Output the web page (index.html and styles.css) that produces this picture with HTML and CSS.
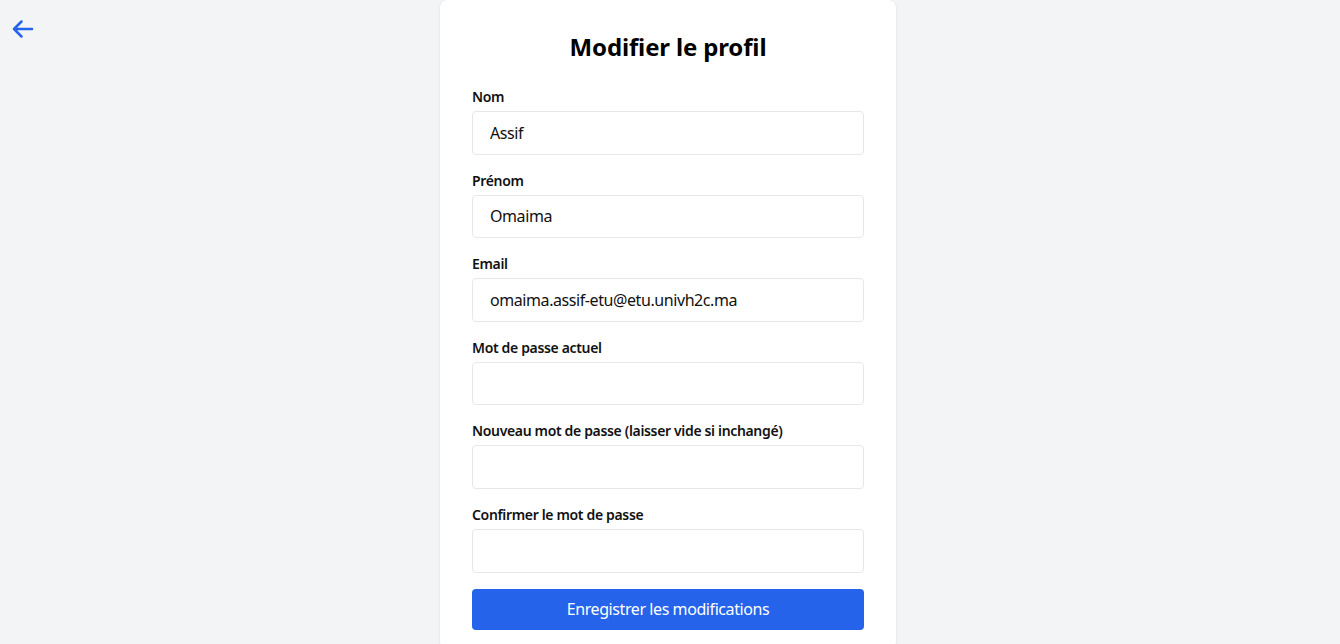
FILE: index.html
```html
<!DOCTYPE html>
<html lang="fr">
<head>
<meta charset="utf-8">
<title>Modifier le profil</title>
<link rel="stylesheet" href="styles.css">
</head>
<body>
<a class="back" href="#" aria-label="Retour">
  <svg width="24" height="24" viewBox="0 0 24 24" fill="none" stroke="currentColor" stroke-width="2.5" stroke-linecap="round" stroke-linejoin="round"><path d="M10.5 19.5 3 12l7.5-7.5M3 12h18"/></svg>
</a>
<main class="page">
  <form class="card">
    <h2 class="title">Modifier le profil</h2>
    <div class="field">
      <label class="label">Nom</label>
      <input class="input" type="text" value="Assif">
    </div>
    <div class="field">
      <label class="label">Prénom</label>
      <input class="input" type="text" value="Omaima">
    </div>
    <div class="field">
      <label class="label">Email</label>
      <input class="input" type="email" value="omaima.assif-etu@etu.univh2c.ma">
    </div>
    <div class="field">
      <label class="label">Mot de passe actuel</label>
      <input class="input" type="password">
    </div>
    <div class="field">
      <label class="label">Nouveau mot de passe (laisser vide si inchangé)</label>
      <input class="input" type="password">
    </div>
    <div class="field">
      <label class="label">Confirmer le mot de passe</label>
      <input class="input" type="password">
    </div>
    <button class="btn" type="button">Enregistrer les modifications</button>
  </form>
</main>
</body>
</html>
```
FILE: styles.css
```css
* { box-sizing: border-box; }
html, body { margin: 0; padding: 0; }
body {
  background: #f3f4f6;
  font-family: "Noto Sans", "Open Sans", sans-serif;
  color: #111827;
  min-height: 644px;
}
.back {
  position: absolute;
  left: 11px;
  top: 17px;
  color: #2563eb;
  display: block;
  line-height: 0;
}
.page {
  display: flex;
  justify-content: center;
  padding-right: 4px;
}
.card {
  width: 456px;
  background: #fff;
  border-radius: 8px;
  box-shadow: 0 1px 3px rgba(0,0,0,0.08), 0 1px 2px rgba(0,0,0,0.04);
  padding: 31px 32px 20px;
  display: flex;
  flex-direction: column;
}
.title {
  margin: 0 0 24px;
  font-size: 24px;
  line-height: 32px;
  font-weight: 700;
  text-align: center;
  color: #000;
  letter-spacing: -0.15px;
}
.field {
  display: flex;
  flex-direction: column;
  gap: 4px;
  margin-bottom: 16px;
}
.label {
  font-size: 14px;
  line-height: 20px;
  font-weight: 600;
  color: #111;
  letter-spacing: -0.34px;
}
.input {
  height: 43.6px;
  border: 1px solid #e5e7eb;
  border-radius: 4px;
  padding: 0 17px;
  font-family: inherit;
  font-size: 16px;
  letter-spacing: -0.42px;
  color: #111;
  background: #fff;
  outline: none;
}
.btn {
  height: 41px;
  border: none;
  border-radius: 4px;
  background: #2563eb;
  color: #fff;
  font-family: inherit;
  font-size: 16px;
  letter-spacing: -0.42px;
}
```
